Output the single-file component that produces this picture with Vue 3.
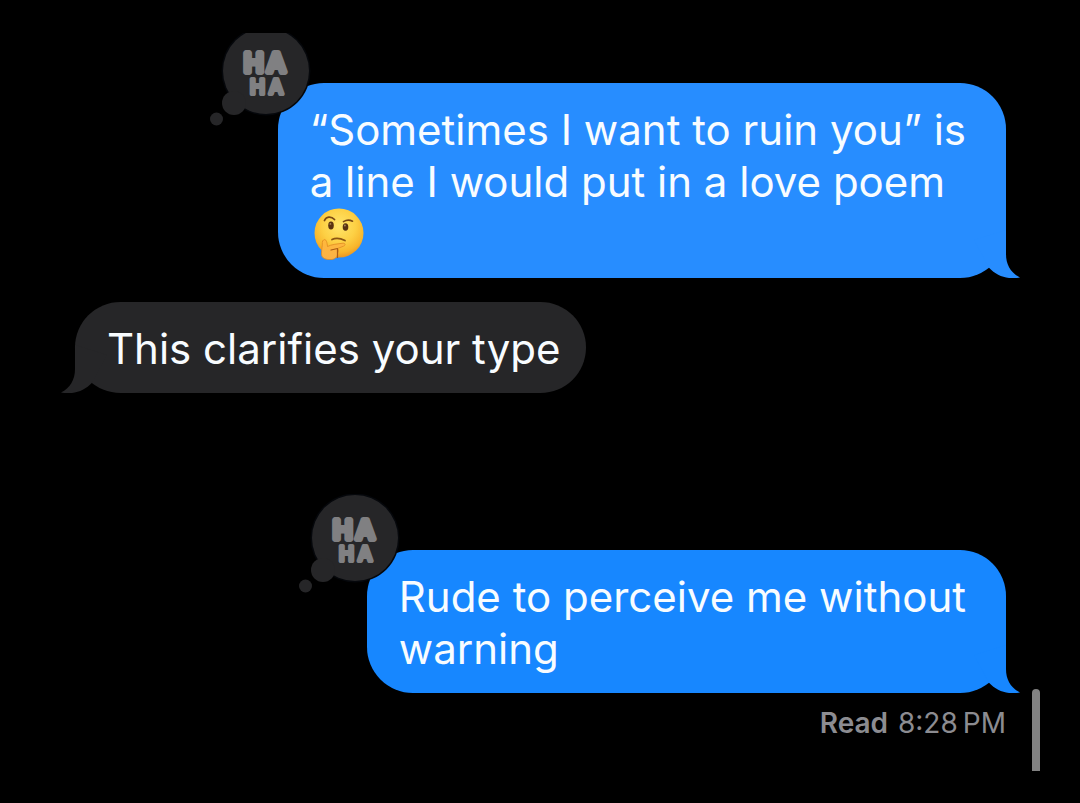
<script setup>
const messages = [
  {
    id: 1,
    side: 'sent',
    tone: 'light',
    lines: ['“Sometimes I want to ruin you” is', 'a line I would put in a love poem'],
    emoji: true,
    reaction: true,
  },
  { id: 2, side: 'received', tone: 'grey', lines: ['This clarifies your type'] },
  {
    id: 3,
    side: 'sent',
    tone: 'deep',
    lines: ['Rude to perceive me without', 'warning'],
    reaction: true,
  },
]
</script>

<template>
  <main class="screen">
    <section class="chat" aria-label="Conversation">
      <article v-for="m in messages" :key="m.id" class="bubble" :class="[m.side, m.tone]">
        <p class="text">
          <span v-for="line in m.lines" :key="line" class="line">{{ line }}</span>
          <span v-if="m.emoji" class="line">
            <svg class="emoji" viewBox="0 0 50 52" role="img" aria-label="Thinking face">
              <defs>
                <radialGradient id="face" cx="50%" cy="35%" r="68%">
                  <stop offset="0" stop-color="#ffe56a" />
                  <stop offset="0.5" stop-color="#fdd044" />
                  <stop offset="0.8" stop-color="#f8b52c" />
                  <stop offset="1" stop-color="#e88c20" />
                </radialGradient>
                <linearGradient id="hand" x1="0" y1="0" x2="0" y2="1">
                  <stop offset="0" stop-color="#ffb83c" />
                  <stop offset="1" stop-color="#fbb246" />
                </linearGradient>
              </defs>
              <circle cx="25" cy="25" r="24.5" fill="url(#face)" />
              <ellipse cx="17" cy="17.5" rx="2.8" ry="3.9" fill="#593211" />
              <ellipse cx="31.5" cy="19" rx="2.8" ry="3.8" fill="#593211" />
              <circle cx="16.4" cy="15.9" r="0.9" fill="#a9855a" />
              <circle cx="30.9" cy="17.5" r="0.9" fill="#a9855a" />
              <path d="M10.5 12.5C12 8.5 17 7.8 20.5 11.5" fill="none" stroke="#7a4813" stroke-width="1.8" stroke-linecap="round" />
              <path d="M29.5 13.6C32 12 35.5 11.6 38.5 13.2" fill="none" stroke="#7a4813" stroke-width="1.7" stroke-linecap="round" />
              <path d="M18 31.5C22 29.5 27 30.5 31 32.5" fill="none" stroke="#8a5513" stroke-width="1.7" stroke-linecap="round" />
              <path
                d="M9.5 32C11.5 30.5 13 33 13.5 38.5C17 36.5 24 35.8 29 35.2C31.5 35 31.8 37.5 29.5 38.2L23.5 40.5C25 42 24.5 44 23.5 45C24 48 22 51 18 51.5C12 52 7.5 50.5 7.5 46C7.5 41 8.5 38 8.3 34.5C8.3 33.2 8.7 32.4 9.5 32Z"
                fill="url(#hand)"
                stroke="#e08a21"
                stroke-width="0.8"
              />
              <path d="M23.5 40.5L17 42M23.5 41V49.5" fill="none" stroke="#a85a14" stroke-width="1.2" stroke-linecap="round" />
            </svg>
          </span>
        </p>
        <svg class="tail" viewBox="0 0 46 48" aria-hidden="true">
          <path d="M32 0V24C32 35 37 43 46 47.5C34 50 23 46 15 37.7L0 10Z" />
        </svg>
        <svg v-if="m.reaction" class="reaction" viewBox="0 0 104 104" role="img" aria-label="Ha ha reaction">
          <circle cx="57" cy="44" r="44.5" fill="#05070b" />
          <g fill="#262628">
            <circle cx="57" cy="44" r="43" />
            <circle cx="25" cy="76" r="12" />
            <circle cx="7.5" cy="92" r="6.5" />
          </g>
          <text class="haha">
            <tspan class="big" x="35 58" y="45">HA</tspan>
            <tspan class="small" x="41 60" y="67">HA</tspan>
          </text>
        </svg>
      </article>
      <p class="receipt"><strong>Read</strong> 8:28&#8201;PM</p>
      <div class="scrollbar" aria-hidden="true"></div>
    </section>
  </main>
</template>

<style>
body {
  margin: 0;
  background: #000;
}
</style>

<style scoped>
.screen {
  box-sizing: border-box;
  min-height: 100vh;
  padding: 33px 0 32px;
  display: grid;
  background: #000;
  font-family: Inter, "Liberation Sans", sans-serif;
}
.chat {
  position: relative;
  overflow: hidden;
  display: flex;
  flex-direction: column;
  padding: 50px 74px 0 75px;
}
.bubble {
  position: relative;
  border-radius: 46px;
  color: #f8fcff;
}
.sent {
  align-self: flex-end;
  padding: 21px 40px 18px 32px;
}
.received {
  align-self: flex-start;
  margin-top: 24px;
  padding: 21px 26px 18px 32px;
}
.received + .sent {
  margin-top: 157px;
}
.light {
  background: #278dff;
  fill: #278dff;
}
.grey {
  background: #262628;
  fill: #262628;
}
.deep {
  background: #1787ff;
  fill: #1787ff;
}
.text {
  margin: 0;
  font-size: 42px;
  line-height: 52px;
  white-space: nowrap;
}
.line {
  display: block;
  height: 52px;
}
.emoji {
  display: block;
  width: 50px;
  height: 52px;
  margin-left: 4px;
}
.tail {
  position: absolute;
  right: -14px;
  bottom: 0;
  width: 46px;
  height: 48px;
}
.received .tail {
  right: auto;
  left: -14px;
  transform: scaleX(-1);
}
.reaction {
  position: absolute;
  left: -69px;
  top: -56px;
  width: 104px;
  height: 104px;
}
.haha {
  fill: #808082;
  stroke: #808082;
  stroke-linejoin: round;
  font-weight: 500;
}
.big {
  font-size: 26px;
  stroke-width: 6px;
}
.small {
  font-size: 20px;
  stroke-width: 4px;
}
.receipt {
  align-self: flex-end;
  margin: 12px 0 0;
  color: #8c8c91;
  font-size: 28px;
  line-height: 36px;
}
.receipt strong {
  margin-right: 2px;
  font-weight: 600;
}
.scrollbar {
  position: absolute;
  right: 40px;
  bottom: 0;
  width: 8px;
  height: 82px;
  border-radius: 4px 4px 0 0;
  background: #828282;
}
</style>
